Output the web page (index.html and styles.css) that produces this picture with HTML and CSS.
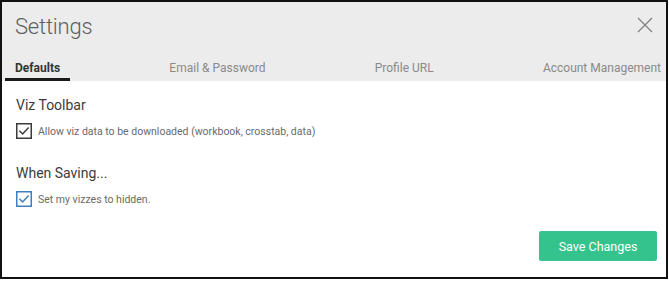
FILE: index.html
```html
<!DOCTYPE html>
<html>
<head>
<meta charset="utf-8">
<link rel="stylesheet" href="styles.css">
</head>
<body>
<div class="dialog">
  <div class="header">
    <div class="title-row">
      <h1 class="title">Settings</h1>
      <svg class="close" width="16" height="16" viewBox="0 0 16 16"><path d="M1 1 L15 15 M15 1 L1 15" stroke="#808080" stroke-width="1.3" fill="none"/></svg>
    </div>
    <div class="tabs">
      <div class="tab active">Defaults</div>
      <div class="tab">Email &amp; Password</div>
      <div class="tab">Profile URL</div>
      <div class="tab last">Account Management</div>
    </div>
  </div>
  <div class="content">
    <div class="section-title">Viz Toolbar</div>
    <div class="check-row">
      <svg class="box" width="16" height="16" viewBox="0 0 16 16"><rect x="0.75" y="0.75" width="14.5" height="14.5" fill="#fff" stroke="#3a3a3a" stroke-width="1.5"/><path d="M3.4 7.8 L6.6 11 L12.6 4.6" stroke="#3a3a3a" stroke-width="1.5" fill="none"/></svg>
      <span class="label">Allow viz data to be downloaded (workbook, crosstab, data)</span>
    </div>
    <div class="section-title second">When Saving...</div>
    <div class="check-row">
      <svg class="box" width="16" height="16" viewBox="0 0 16 16"><rect x="0.75" y="0.75" width="14.5" height="14.5" fill="#fff" stroke="#3f7fbf" stroke-width="1.5"/><path d="M3.4 7.8 L6.6 11 L12.6 4.6" stroke="#3f7fbf" stroke-width="1.5" fill="none"/></svg>
      <span class="label">Set my vizzes to hidden.</span>
    </div>
    <div class="actions">
      <button class="save">Save Changes</button>
    </div>
  </div>
</div>
</body>
</html>
```
FILE: styles.css
```css
html, body {
  margin: 0;
  padding: 0;
  background: #fff;
}
.dialog {
  width: 668px;
  height: 279px;
  box-sizing: border-box;
  border: 2px solid #111;
  background: #fff;
  font-family: Roboto, "Liberation Sans", sans-serif;
}
.header {
  background: #ececec;
}
.title-row {
  display: flex;
  justify-content: space-between;
  align-items: flex-start;
  padding: 12px 13px 0 13px;
  height: 46px;
}
.title {
  margin: 0;
  font-size: 22px;
  line-height: 26px;
  font-weight: 300;
  color: #5e5e5e;
  letter-spacing: -0.2px;
}
.close {
  margin-top: 3px;
}
.tabs {
  display: flex;
  justify-content: space-between;
  padding: 0 5px 0 3px;
}
.tab {
  font-size: 12px;
  line-height: 16px;
  color: #8a8a8a;
  padding: 0 10px 2px;
  border-bottom: 3px solid transparent;
}
.tab.last {
  padding-right: 0;
}
.tab.active {
  color: #333;
  font-weight: 700;
  border-bottom-color: #1a1a1a;
}
.content {
  padding: 15px 9px 0 14px;
}
.section-title {
  font-size: 14px;
  line-height: 18px;
  color: #3c3c3c;
}
.section-title.second {
  margin-top: 25px;
}
.check-row {
  display: flex;
  align-items: center;
  gap: 6px;
  margin-top: 9px;
  height: 16px;
}
.label {
  font-size: 10.5px;
  color: #6a6a6a;
}
.actions {
  display: flex;
  justify-content: flex-end;
  margin-top: 24px;
}
.save {
  width: 118px;
  height: 30px;
  border: none;
  border-radius: 2px;
  background: #35c38d;
  color: #fff;
  font-family: Roboto, "Liberation Sans", sans-serif;
  font-size: 12.5px;
  padding: 0;
}
```
